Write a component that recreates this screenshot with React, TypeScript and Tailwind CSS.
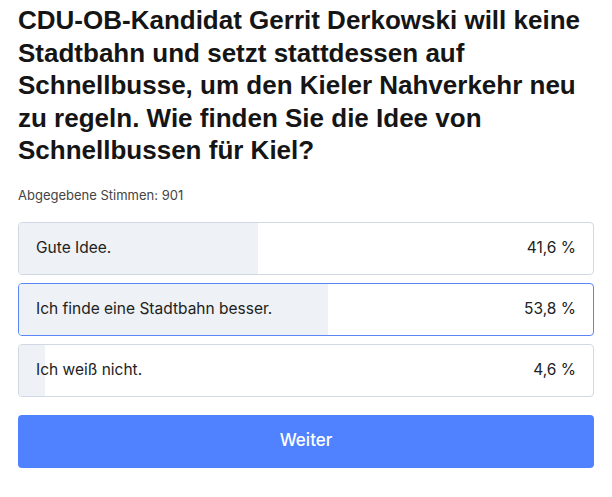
const options = [
  { label: 'Gute Idee.', pct: 41.6, active: false },
  { label: 'Ich finde eine Stadtbahn besser.', pct: 53.8, active: true },
  { label: 'Ich weiß nicht.', pct: 4.6, active: false },
];

export default function App() {
  return (
    <main className="min-h-screen bg-white px-[18px] pt-[4px] font-['Inter',sans-serif]">
      <h1 className="font-['Liberation_Sans',sans-serif] text-[26px] font-bold leading-[32.5px] text-[#151515]">
        CDU-OB-Kandidat Gerrit Derkowski will keine
        <br />
        Stadtbahn und setzt stattdessen auf
        <br />
        Schnellbusse, um den Kieler Nahverkehr neu
        <br />
        zu regeln. Wie finden Sie die Idee von
        <br />
        Schnellbussen für Kiel?
      </h1>
      <p className="mt-[20px] text-[13px] leading-[16px] text-[#444]">Abgegebene Stimmen: 901</p>

      <div className="mt-[19px] flex flex-col gap-[8px]">
        {options.map((o) => (
          <div
            key={o.label}
            className={
              'relative h-[53px] overflow-hidden rounded-[4px] border bg-white ' +
              (o.active ? 'border-[#5a86f5]' : 'border-[#cfd8e3]')
            }
          >
            <div className="absolute inset-y-0 left-0 bg-[#eef1f5]" style={{ width: `${o.pct}%` }} />
            <div className="relative flex h-full items-center justify-between pl-[17px] pr-[17px] text-[15.5px] text-[#222]">
              <span>{o.label}</span>
              <span>{o.pct.toFixed(1).replace('.', ',')} %</span>
            </div>
          </div>
        ))}
      </div>

      <button className="mt-[18px] flex h-[53px] w-full items-center justify-center rounded-[4px] bg-[#5082ff] text-[17px] font-medium text-white">
        Weiter
      </button>
    </main>
  );
}
